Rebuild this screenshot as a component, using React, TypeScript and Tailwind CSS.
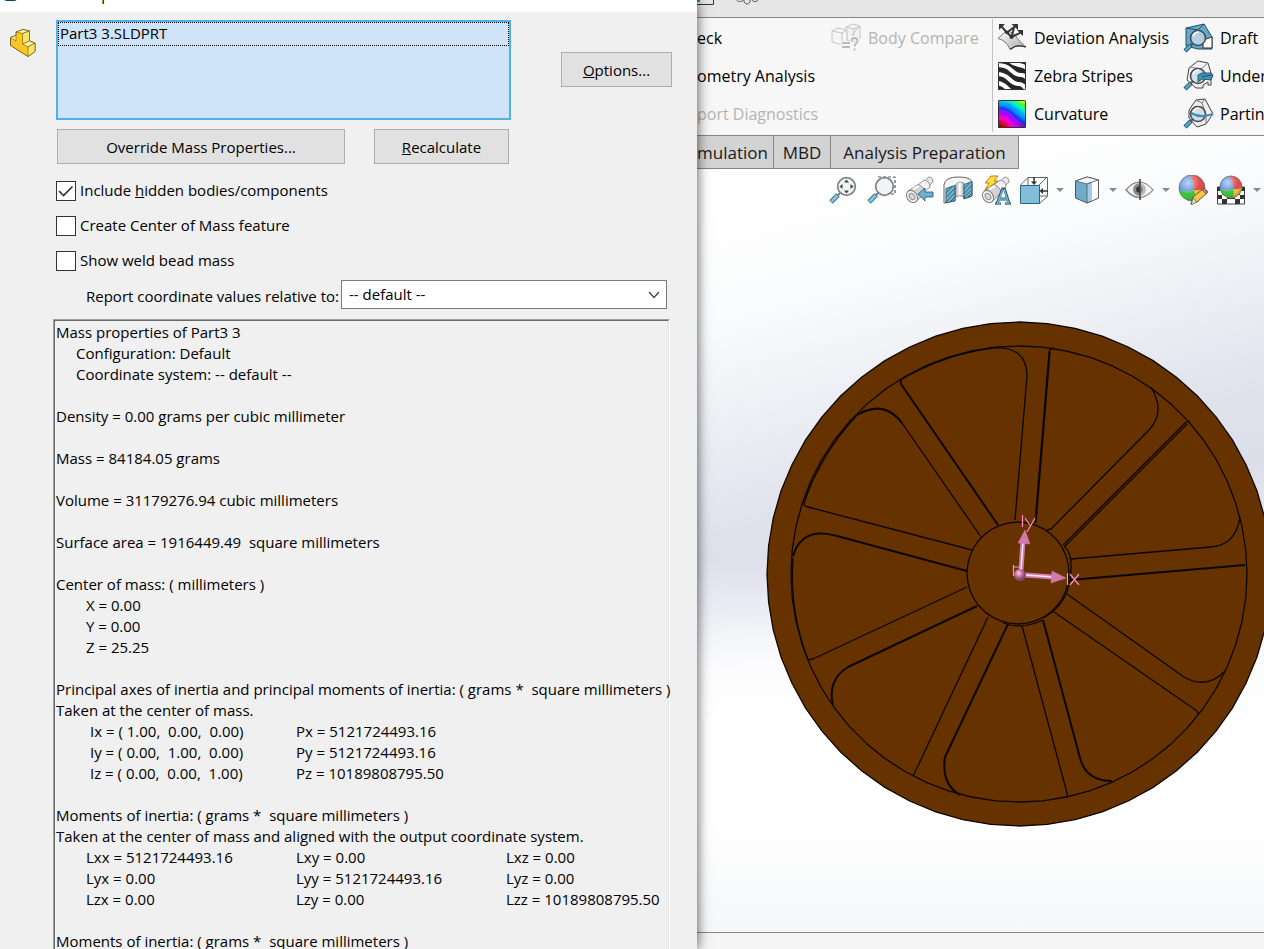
import type { ReactNode } from 'react'

const lxx = [
  ['Lxx = 5121724493.16', 'Lxy = 0.00', 'Lxz = 0.00'],
  ['Lyx = 0.00', 'Lyy = 5121724493.16', 'Lyz = 0.00'],
  ['Lzx = 0.00', 'Lzy = 0.00', 'Lzz = 10189808795.50'],
]

const principal = [
  ['Ix = ( 1.00,  0.00,  0.00)', 'Px = 5121724493.16'],
  ['Iy = ( 0.00,  1.00,  0.00)', 'Py = 5121724493.16'],
  ['Iz = ( 0.00,  0.00,  1.00)', 'Pz = 10189808795.50'],
]

function ring(sides: number, cx: number, cy: number, r: number) {
  return Array.from({ length: sides }, (_, i) => {
    const a = (i / sides) * Math.PI * 2
    return `${(cx + r * Math.cos(a)).toFixed(1)},${(cy + r * Math.sin(a)).toFixed(1)}`
  }).join(' ')
}

export default function App() {
  return (
    <div className="grid h-screen grid-cols-[697fr_567fr] overflow-hidden bg-white font-['Open_Sans',sans-serif] text-black">
      <MassProperties />
      <MainWindow />
    </div>
  )
}

function MassProperties() {
  return (
    <section className="relative z-10 flex min-h-0 flex-col overflow-hidden bg-[#f0f0f0] text-[15px] leading-[21px] shadow-[0_0_12px_rgba(0,0,0,0.7)]">
      <header className="flex h-3 shrink-0 items-end gap-5 overflow-hidden bg-white pb-2 pl-1">
        <svg viewBox="0 0 13 13" className="h-[13px] w-[13px] shrink-0" aria-hidden="true">
          <rect width="13" height="10" rx="3" fill="#0d3f66" />
        </svg>
        <h1 className="leading-5">Mass Properties</h1>
      </header>

      <div className="flex shrink-0 pt-2">
        <div className="w-14 shrink-0 pt-2 pl-[9px]">
          <PartIcon />
        </div>
        <div className="flex min-w-0 flex-1 items-start gap-[50px] pr-[25px]">
          <select
            size={4}
            aria-label="Selected items"
            className="h-[100px] min-w-0 flex-1 appearance-none overflow-hidden border-2 border-[#53b0e4] bg-[#cfe4f8] p-0 outline-none"
          >
            <option className="min-h-6 border border-dotted border-black px-px py-0 leading-[22px]">Part3 3.SLDPRT</option>
          </select>
          <PushButton className="mt-8 w-[111px]">
            <u>O</u>ptions...
          </PushButton>
        </div>
      </div>

      <div className="flex shrink-0 gap-[29px] pt-[9px] pl-[57px]">
        <PushButton className="w-72">Override Mass Properties...</PushButton>
        <PushButton className="w-[135px]">
          <u>R</u>ecalculate
        </PushButton>
      </div>

      <div className="flex shrink-0 flex-col gap-[14px] pt-4 pl-14">
        <CheckRow id="hidden-bodies" checked>
          Include <u>h</u>idden bodies/components
        </CheckRow>
        <CheckRow id="com-feature">Create Center of Mass feature</CheckRow>
        <CheckRow id="weld-bead">Show weld bead mass</CheckRow>
      </div>

      <div className="flex shrink-0 items-center justify-between pt-[9px] pr-[30px] pl-[86px]">
        <label htmlFor="coord" className="shrink-0 pt-1">
          Report coordinate values relative to:
        </label>
        <div className="relative w-[326px] shrink-0">
          <select id="coord" className="h-[29px] w-full appearance-none border border-[#7a7a7a] bg-white pr-6 pl-[7px] outline-none">
            <option>-- default --</option>
          </select>
          <svg viewBox="0 0 12 8" className="pointer-events-none absolute top-[11px] right-[7px] h-2 w-3" fill="none" stroke="#444">
            <path d="M1 1 6 6.5 11 1" strokeWidth="1.3" />
          </svg>
        </div>
      </div>

      <div className="mt-[10px] mr-[27px] ml-[53px] min-h-0 flex-1 border-t border-r border-l border-t-[#a0a0a0] border-r-white border-l-[#a0a0a0]">
        <div className="border-t border-r border-l border-t-[#696969] border-r-[#e3e3e3] border-l-[#696969] pt-px pl-px whitespace-pre">
          <p>Mass properties of Part3 3</p>
          <p className="pl-5">Configuration: Default</p>
          <p className="pl-5">Coordinate system: -- default --</p>
          <p className="mt-[21px]">Density = 0.00 grams per cubic millimeter</p>
          <p className="mt-[21px]">Mass = 84184.05 grams</p>
          <p className="mt-[21px]">Volume = 31179276.94 cubic millimeters</p>
          <p className="mt-[21px]">{'Surface area = 1916449.49  square millimeters'}</p>
          <p className="mt-[21px]">Center of mass: ( millimeters )</p>
          <p className="pl-[30px]">X = 0.00</p>
          <p className="pl-[30px]">Y = 0.00</p>
          <p className="pl-[30px]">Z = 25.25</p>
          <p className="mt-[21px]">{'Principal axes of inertia and principal moments of inertia: ( grams *  square millimeters )'}</p>
          <p>Taken at the center of mass.</p>
          <ValueTable rows={principal} className="w-[420px]" cellClassName="pl-1" />
          <p className="mt-[21px]">{'Moments of inertia: ( grams *  square millimeters )'}</p>
          <p>Taken at the center of mass and aligned with the output coordinate system.</p>
          <ValueTable rows={lxx} className="w-[580px]" cellClassName="pl-0" />
          <p className="mt-[21px]">{'Moments of inertia: ( grams *  square millimeters )'}</p>
        </div>
      </div>
    </section>
  )
}

function ValueTable({ rows, className, cellClassName }: { rows: string[][]; className: string; cellClassName: string }) {
  return (
    <table className={`ml-[30px] table-fixed border-collapse ${className}`}>
      <tbody>
        {rows.map((row) => (
          <tr key={row[0]}>
            {row.map((cell, i) => (
              <td key={cell} className={i === 0 ? `w-[210px] py-0 ${cellClassName}` : 'w-[210px] p-0'}>
                {cell}
              </td>
            ))}
          </tr>
        ))}
      </tbody>
    </table>
  )
}

function PushButton({ className, children }: { className: string; children: ReactNode }) {
  return (
    <button type="button" className={`h-[35px] shrink-0 border border-[#adadad] bg-[#e1e1e1] pt-[2px] ${className}`}>
      {children}
    </button>
  )
}

function CheckRow({ id, checked = false, children }: { id: string; checked?: boolean; children: ReactNode }) {
  return (
    <div className="flex h-[21px] items-center gap-1">
      <div className="relative h-5 w-5">
        <input
          id={id}
          type="checkbox"
          defaultChecked={checked}
          className="peer block h-5 w-5 appearance-none border border-[#333] bg-white"
        />
        <svg viewBox="0 0 20 20" className="pointer-events-none absolute inset-0 hidden h-5 w-5 peer-checked:block" fill="none" stroke="#333">
          <path d="M3 10 7.5 14.5 16.5 5.5" strokeWidth="1.7" />
        </svg>
      </div>
      <label htmlFor={id}>{children}</label>
    </div>
  )
}

function PartIcon() {
  return (
    <svg viewBox="0 0 27 30" className="h-[30px] w-[27px]" stroke="#6b5208" strokeWidth=".9" strokeLinejoin="round">
      <path d="M1.500 9.500 7 7.500V4L14 1.500 20.500 3v10l5.500 2v8.500L19 28.500 1.500 17.500z" fill="#f8c820" />
      <path d="M7 4 14 1.500 20.500 3 13.500 5.500z" fill="#fff2a0" strokeWidth=".6" />
      <path d="M13.500 5.500 20.500 3v10l-6 3-1-1z" fill="#fbe468" strokeWidth=".6" />
      <path d="M13.500 16 20.500 13 26 15l-7 4z" fill="#fff0a0" strokeWidth=".6" />
      <path d="M19 19 26 15v8.500L19 28.500z" fill="#fbe468" strokeWidth=".6" />
      <path d="M1.500 9.500 7 7.500V13z" fill="#fff0a0" strokeWidth=".6" />
    </svg>
  )
}

function MainWindow() {
  return (
    <main className="flex min-h-0 min-w-0 flex-col overflow-hidden bg-[#f5f5f5]">
      <div className="flex h-[18px] shrink-0 items-start border-b border-[#868686] bg-[#e6e6e6]">
        <svg viewBox="0 0 62 5" className="h-[5px] w-[62px]" fill="none">
          <path d="M0 4.500H16.500V0" stroke="#333" />
          <path d="M0 0h3v2H0z" fill="#2680a8" />
          <path d="M40 0c0 2 5 2 6 0M47 0v2q3 4 6 0V0M55 0c1 2 5 2 6 0" stroke="#555" />
        </svg>
      </div>
      <Ribbon />
      <div className="flex min-h-0 flex-1 flex-col border-b border-[#868686] bg-[linear-gradient(180deg,rgba(255,255,255,0)_53%,rgba(255,255,255,0.85)_66%,#ffffff_74%,#ffffff_86%,#f6f7f9_100%),linear-gradient(165deg,#ffffff_8%,#fafbfc_20%,#eceef4_32%,#dfe2ec_43%,#dcdeea_50%,#e6e8f1_60%)]">
        <nav className="flex h-[33px] shrink-0 text-[17px] text-[#1a1a1a]">
          <Tab className="w-[77px]">mulation</Tab>
          <Tab className="w-[57px] justify-center">MBD</Tab>
          <Tab className="w-[188px] justify-center">Analysis Preparation</Tab>
        </nav>
        <ViewToolbar />
        <Wheel />
      </div>
      <div className="h-4 shrink-0" />
    </main>
  )
}

function Tab({ className, children }: { className: string; children: ReactNode }) {
  return (
    <button type="button" className={`flex shrink-0 items-center border-r border-b border-[#868686] bg-[#d3d3d3] pt-[2px] ${className}`}>
      {children}
    </button>
  )
}

function Ribbon() {
  return (
    <div className="flex h-[118px] shrink-0 overflow-hidden border-b border-[#868686] bg-[#f7f7f7] pt-px text-[16px]">
      <div className="flex w-[135px] shrink-0 flex-col">
        <RibbonItem>eck</RibbonItem>
        <RibbonItem>ometry Analysis</RibbonItem>
        <RibbonItem disabled>port Diagnostics</RibbonItem>
      </div>
      <div className="w-40 shrink-0">
        <RibbonItem disabled icon={<CompareIcon />}>
          Body Compare
        </RibbonItem>
      </div>
      <div className="mb-[3px] flex w-[187px] shrink-0 flex-col border-l border-[#c4c4c4] pl-[5px]">
        <RibbonItem icon={<DeviationIcon />}>Deviation Analysis</RibbonItem>
        <RibbonItem icon={<ZebraIcon />}>Zebra Stripes</RibbonItem>
        <RibbonItem icon={<CurvatureIcon />}>Curvature</RibbonItem>
      </div>
      <div className="flex shrink-0 flex-col pl-[5px]">
        <RibbonItem icon={<DraftIcon />}>Draft</RibbonItem>
        <RibbonItem icon={<UndercutIcon />}>Under</RibbonItem>
        <RibbonItem icon={<PartingIcon />}>Partin</RibbonItem>
      </div>
    </div>
  )
}

function RibbonItem({ icon, disabled = false, children }: { icon?: ReactNode; disabled?: boolean; children: ReactNode }) {
  return (
    <button type="button" disabled={disabled} className="flex h-[38px] shrink-0 items-center gap-2 whitespace-nowrap disabled:text-[#b4b4b4]">
      {icon}
      {children}
    </button>
  )
}

function RibbonSvg({ children }: { children: ReactNode }) {
  return (
    <svg viewBox="0 0 28 28" className="h-7 w-7 shrink-0 overflow-visible" fill="none" strokeLinejoin="round">
      {children}
    </svg>
  )
}

function CompareIcon() {
  return (
    <RibbonSvg>
      <path d="M14 3 21 0l7 2v12l-5 4-8-2z" fill="#f3f3f3" stroke="#c4c4c4" />
      <path d="M14 3 22 5 28 2M22 5v9" stroke="#c4c4c4" />
      <path d="M19 12 27 3" stroke="#c4c4c4" />
      <path d="M0 7 6 4l9 2v12l-4 3-11-3z" fill="#f6f6f6" stroke="#c4c4c4" />
      <path d="M0 7 10 9 15 6M10 9v8" stroke="#c4c4c4" />
      <path d="M9 17h10v7H9z" fill="#f7f7f7" />
      <path d="M10 19h8M10 23h8" stroke="#b8b8b8" strokeWidth="2" />
      <path d="M19.500 17q0-3 3-3t3 3q0 2-2 3-1 1-1 2.500" stroke="#f7f7f7" strokeWidth="4" />
      <path d="M19.500 17q0-3 3-3t3 3q0 2-2 3-1 1-1 2.500M22.500 24.500v2" stroke="#b8b8b8" strokeWidth="1.800" />
    </RibbonSvg>
  )
}

function DeviationIcon() {
  return (
    <RibbonSvg>
      <defs>
        <linearGradient id="sheet" x1="0" y1="0" x2="1" y2="1">
          <stop offset="0" stopColor="#fff" />
          <stop offset="1" stopColor="#a8a8a8" />
        </linearGradient>
      </defs>
      <path d="M0 14.500 8 7q8 1 11 7 4 5 9 9-7-2-11-.500L12 25.500Q8 16 0 14.500z" fill="url(#sheet)" stroke="#777" />
      <path d="M12 25.500 17 22.500q4-1.500 11 .500" stroke="#333" strokeWidth="1.300" />
      <path d="M3 2 9 8.500 17.500 2M6 5.500 13.500 13 24 8M13.500 13 16 4" stroke="#333" strokeWidth="1.900" />
      <path d="M1 0h6L1 6zM13.500 0H20v6zM19 6h6v6z" fill="#333" />
      <circle cx="9" cy="8.500" r="1.800" fill="#333" />
      <circle cx="13.500" cy="13" r="2" fill="#333" />
    </RibbonSvg>
  )
}

function ZebraIcon() {
  return (
    <RibbonSvg>
      <defs>
        <clipPath id="zebra">
          <rect width="28" height="28" rx="1" />
        </clipPath>
      </defs>
      <rect width="28" height="28" rx="1" fill="#262626" />
      <g clipPath="url(#zebra)" stroke="#fff" strokeWidth="4">
        <path d="M9-4Q14 2 21 3T32 9" />
        <path d="M-2 3Q8 3 13 8T23 13 32 20" />
        <path d="M-2 12Q6 12 11 17T21 22 30 31" />
        <path d="M-2 21Q4 21 9 26T16 31" />
      </g>
      <rect x=".5" y=".5" width="27" height="27" rx="1" stroke="#333" />
    </RibbonSvg>
  )
}

function CurvatureIcon() {
  return (
    <RibbonSvg>
      <defs>
        <clipPath id="curv">
          <rect width="28" height="28" rx="1" />
        </clipPath>
        <filter id="soften">
          <feGaussianBlur stdDeviation="1.200" />
        </filter>
      </defs>
      <g clipPath="url(#curv)">
        <rect width="28" height="28" fill="#6b1500" />
        <g filter="url(#soften)" strokeWidth="5">
          <path d="M-4 23Q4 20 10 28T14 34" stroke="#e00020" />
          <path d="M-4 18Q5 15 12 23T20 33" stroke="#ff00c8" />
          <path d="M-4 13Q6 10 13 18T26 32" stroke="#b000ff" />
          <path d="M-4 9Q7 6 14 13T32 27" stroke="#1830ff" />
          <path d="M-4 4Q8 2 15 8T32 21" stroke="#00a0ff" />
          <path d="M-4-1Q9-2 16 3T32 15" stroke="#00f0d0" />
          <path d="M6-4Q17-2 22 3T32 8" stroke="#30ff30" />
          <path d="M19-5Q25 0 32 2" stroke="#f4ff00" strokeWidth="6" />
        </g>
      </g>
      <rect x=".5" y=".5" width="27" height="27" rx="1" stroke="#333" />
    </RibbonSvg>
  )
}

function Lens() {
  return (
    <>
      <path d="M9 19 6 22" stroke="#555" strokeWidth="2" />
      <path d="M7 21 1 27" stroke="#1c5470" strokeWidth="4.500" />
      <path d="M6.500 21.500 1.500 26.500" stroke="#5aa9cc" strokeWidth="2.500" />
      <circle cx="14" cy="14" r="7.500" fill="#c4dce8" fillOpacity=".8" stroke="#4a4a4a" strokeWidth="1.600" />
      <path d="M9 12q2-4 6-4" stroke="#fff" strokeWidth="1.500" />
    </>
  )
}

function DraftIcon() {
  return (
    <RibbonSvg>
      <path d="M2 4 20 0l8 13v12H14L2 22z" fill="#62aacb" stroke="#1f4f68" />
      <path d="M2 4 14 6 20 0M14 6l5 9" stroke="#1f4f68" />
      <path d="M19 16 28 13v11h-9z" fill="#fff" stroke="#333" />
      <Lens />
    </RibbonSvg>
  )
}

function UndercutIcon() {
  return (
    <RibbonSvg>
      <path d="M5 6 14-1 24 1l3 10v12h-3v-3l-5 3v3h-7L3 18z" fill="#f2f2f2" stroke="#444" />
      <path d="M6 5l11 2 7-6M17 7l2 6" stroke="#888" />
      <Lens />
      <path d="M14 13v7l4-3 9 1 2-5-2-2H18z" fill="#3f93bb" stroke="#1f4f68" strokeWidth=".9" />
      <path d="M18 14.500 29 13" stroke="#1f4f68" />
    </RibbonSvg>
  )
}

function PartingIcon() {
  return (
    <RibbonSvg>
      <path d="M5 10 12 0l9-1 8 15-7 10-9 3-8-9z" fill="#ededed" stroke="#444" />
      <path d="M12 0 18 3 21-1M18 3l4 12v9" stroke="#777" />
      <Lens />
      <path d="M7 13q7 4 14 3l8-2" stroke="#3c8db5" strokeWidth="2.200" />
    </RibbonSvg>
  )
}

function ViewToolbar() {
  return (
    <div className="flex h-[42px] shrink-0 items-center overflow-hidden pl-[132px]">
      <Tool label="Zoom to Fit">
        <Magnifier />
        <path d="M17.500 4.500l2.500 3h-5zM17.500 18.500l2.500-3h-5zM10.500 11.500l3-2.500v5zM24.500 11.500l-3-2.500v5z" fill="#444" />
      </Tool>
      <Tool label="Zoom to Area">
        <path d="M11 2h17v17H22" stroke="#555" strokeWidth="1.200" strokeDasharray="3 2" />
        <Magnifier />
      </Tool>
      <Tool label="Previous View">
        <Telescope />
        <path d="M13 19 20 13v4h8v5h-8v4z" fill="#6fb0ce" stroke="#2c6580" strokeWidth=".9" />
      </Tool>
      <Tool label="Section View">
        <defs>
          <linearGradient id="bore">
            <stop offset="0" stopColor="#9a9a9a" />
            <stop offset=".5" stopColor="#fff" />
            <stop offset="1" stopColor="#b0b0b0" />
          </linearGradient>
        </defs>
        <path d="M1 10Q2 2 15 2t14 5v14l-8 3-1-3q-5-2-8 1v4L1 28z" fill="#f4f4f4" stroke="#666" />
        <path d="M12 11q3-6 9-3v14q-5-3-9 1z" fill="url(#bore)" stroke="#888" strokeWidth=".8" />
        <path d="M3 13.500 12 10.500v15L3 28zM21 9.500 29 6.500v14.500l-8 2.500z" fill="#74b2cf" stroke="#2c5a70" strokeWidth=".9" />
        <path d="M3 18l6-6.500M3 22.500 12 13M3 27l9-9.500M7 27l5-5M21 14l6-6.500M21 18.500l8-8.500M21 22.500 29 14.500M25 22l4-4" stroke="#24556c" strokeWidth=".9" />
      </Tool>
      <Tool label="Dynamic Annotation Views">
        <Telescope />
        <path d="M10 1h7l-4 5h4L4 15l4-7H4z" fill="#ffe23e" stroke="#b4701a" strokeWidth=".9" />
        <path d="M14 29h6M24 29h6M16 28.500 21.500 14h2L28 28.500M18 24h8" stroke="#2b5b74" strokeWidth="2.800" />
        <path d="M14.500 29h5M24.500 29h5M16.500 28 21.500 15h2L27.500 28M18 24h8" stroke="#75b7d4" strokeWidth="1.400" />
      </Tool>
      <Tool label="View Orientation" menu>
        <path d="M1.500 10 9 2.500h19.500v19l-8 7" stroke="#666" />
        <path d="M9 2v8M20 10l8-8M20 21h8" stroke="#666" />
        <path d="M1.500 10.500h19v18H1.500z" fill="#82bedb" stroke="#2c6580" />
        <path d="M15 2v6M29 16h-6" stroke="#333" strokeWidth="1.500" />
        <path d="M15 10l-3-3.500h6zM20.500 16l3.500-3v6z" fill="#333" />
      </Tool>
      <Tool label="Display Style" menu>
        <path d="M3.500 6 15 2l11.500 3v18L15 28 3.500 23z" fill="#6faccb" stroke="#555" />
        <path d="M3.500 6 15 2l11.500 3L15 9z" fill="#f2f6f8" stroke="#555" strokeWidth=".8" />
        <path d="M15 9 26.500 5v18L15 28z" fill="#9fcde3" stroke="#555" strokeWidth=".8" />
        <path d="M20 7.500 26 5.500v17L20 25.500z" fill="#fbfbfb" />
      </Tool>
      <Tool label="Hide/Show Items" menu>
        <path d="M1 15Q14-1 28 15 14 30 1 15z" fill="#f3f3f3" stroke="#777" strokeWidth="1.200" />
        <circle cx="14.500" cy="14.500" r="6.500" fill="#8a8a8a" />
        <circle cx="14.500" cy="14.500" r="3.300" fill="#333" />
        <path d="M15 7Q22 8 28 15 22 22 15 22.500z" fill="#fff" fillOpacity=".4" />
        <path d="M15 4v21" stroke="#444" strokeWidth="1.600" />
      </Tool>
      <Tool label="Edit Appearance">
        <ColorBall cx={14} cy={13} r={13} />
        <path d="M13 29l2-7L26 13l4 4-11 10z" fill="#f5c945" stroke="#5c4a1a" strokeWidth=".9" />
        <path d="M13 30l2-7 4 4z" fill="#eadcc0" stroke="#555" strokeWidth=".7" />
        <path d="M26 13l4 4-2 2-4-4z" fill="#d87070" stroke="#555" strokeWidth=".6" />
      </Tool>
      <Tool label="Apply Scene" menu>
        <path d="M1.500 12h27v17h-27z" fill="#fff" stroke="#444" />
        <path d="M1 12h5v4H1zM24 12h5v4h-5zM6 16h4v4H6zM20 16h4v4h-4zM1 20h5v4H1zM24 20h5v4h-5zM11 24h8v-2h-8zM6 24h5v5H6zM19 24h5v5h-5z" fill="#333" />
        <ColorBall cx={15} cy={12} r={11} />
      </Tool>
    </div>
  )
}

function Tool({ label, menu = false, children }: { label: string; menu?: boolean; children: ReactNode }) {
  return (
    <>
      <button type="button" aria-label={label} className={menu ? 'w-[30px] shrink-0' : 'w-[38px] shrink-0'}>
        <svg viewBox="0 0 30 30" className="block h-[30px] w-[30px]" fill="none" strokeLinejoin="round">
          {children}
        </svg>
      </button>
      {menu && (
        <button type="button" aria-label={`${label} menu`} className="flex h-[30px] w-[23px] shrink-0 items-center justify-center pr-[2px]">
          <svg viewBox="0 0 8 4" className="h-1 w-2">
            <path d="M0 0h8L4 4z" fill="#8a8a8a" />
          </svg>
        </button>
      )}
    </>
  )
}

function Magnifier() {
  return (
    <>
      <path d="M11 18 8 21" stroke="#777" strokeWidth="2" />
      <path d="M9 20 2 27" stroke="#3f7893" strokeWidth="5" />
      <path d="M8.500 20.500 2.500 26.500" stroke="#86c3dd" strokeWidth="3" />
      <circle cx="17.500" cy="11.500" r="8.800" fill="#eef4f5" fillOpacity=".92" stroke="#808080" strokeWidth="1.700" />
    </>
  )
}

function Telescope() {
  return (
    <>
      <path d="M20 6 23.500 2q4.500 0 4.500 5l-4 4z" fill="#e6e6e6" stroke="#888" strokeWidth=".9" />
      <path d="M13 10 19 5q6 1 6 7l-6 5z" fill="#f2f2f2" stroke="#888" strokeWidth=".9" />
      <path d="M3 16 13 9.500q6 2 7 8L11 27z" fill="#d2d2d2" stroke="#888" strokeWidth=".9" />
      <path d="M8 14 14 11" stroke="#fff" strokeWidth="2" />
      <ellipse cx="7" cy="21.500" rx="5" ry="6.500" transform="rotate(-35 7 21.500)" fill="#f6f6f6" stroke="#808080" />
      <ellipse cx="7" cy="21.500" rx="2.500" ry="3.500" transform="rotate(-35 7 21.500)" fill="#d8d8d8" stroke="#888" />
    </>
  )
}

function ColorBall({ cx, cy, r }: { cx: number; cy: number; r: number }) {
  const id = `shine-${cx}`
  return (
    <>
      <defs>
        <radialGradient id={id} cx=".35" cy=".3" r=".75">
          <stop offset="0" stopColor="#fff" stopOpacity=".65" />
          <stop offset=".6" stopColor="#fff" stopOpacity=".05" />
          <stop offset="1" stopColor="#000" stopOpacity=".3" />
        </radialGradient>
      </defs>
      <circle cx={cx} cy={cy} r={r} fill="#f0c040" />
      <path d={`M${cx - 2} ${cy - r}Q${cx + 3} ${cy - 4} ${cx + 2} ${cy + 2}Q${cx - 5} ${cy + 5} ${cx - r} ${cy + 2}A${r} ${r} 0 0 1 ${cx - 2} ${cy - r}z`} fill="#4a86dd" />
      <path d={`M${cx - 2} ${cy - r}Q${cx + 3} ${cy - 4} ${cx + 2} ${cy + 2}Q${cx + 8} ${cy + 3} ${cx + r} ${cy}A${r} ${r} 0 0 0 ${cx - 2} ${cy - r}z`} fill="#e04040" />
      <path d={`M${cx - r} ${cy + 2}Q${cx - 5} ${cy + 5} ${cx + 2} ${cy + 2}Q${cx + 4} ${cy + 7} ${cx + 1} ${cy + r}A${r} ${r} 0 0 1 ${cx - r} ${cy + 2}z`} fill="#2fc02f" />
      <circle cx={cx} cy={cy} r={r} fill={`url(#${id})`} stroke="#777" strokeWidth=".7" />
    </>
  )
}

// Nine-spoke wheel seen from the front, with the origin triad on its hub
function Wheel() {
  return (
    <svg viewBox="697 211 567 721" className="min-h-0 w-full flex-1" preserveAspectRatio="xMidYMid slice" fill="none" stroke="#0c0600" strokeWidth="1.300" strokeLinejoin="round">
      <defs>
        <radialGradient id="origin" cx=".4" cy=".35">
          <stop offset="0" stopColor="#ffd3ea" />
          <stop offset=".5" stopColor="#cf7aa8" />
          <stop offset="1" stopColor="#8a4670" />
        </radialGradient>
      </defs>
      <polygon points={ring(56, 1019, 574, 252)} fill="#663200" />
      <polygon points={ring(60, 1019, 574, 228)} />
      <polygon points={ring(36, 1018, 573, 51)} />
      <path d="M1043 618Q1066 606 1070 580T1064 546M1003 623Q1022 630 1043 620" />

      <g>
        <path d="M902 379Q945 354 993 348 1027 346 1027 376L1015 520" />
        <path d="M1151 387Q1166 412 1149 430L1051 529 1047 530" />
        <path d="M1240 517Q1236 545 1211 547L1071 559" />
        <path d="M1067 594 1184 677Q1207 690 1225 671" />
        <path d="M1054 612 1197 711 1198 714M1022 626 1067 793V797" />
        <path d="M988 617 916 770 913 776M967 587 813 659 808 660" />
        <path d="M972 550 808 507Q803 506 804 503 820 455 857 415 884 399 902 423L981 537" />
        <path d="M808 660Q789 610 793 558" />
      </g>
      <g strokeWidth="2">
        <path d="M998 525 901 384Q900 381 902 379" />
        <path d="M1070 580 1245 565" />
        <path d="M1043 620 1080 758Q1086 781 1112 781" />
        <path d="M1008 624 945 757Q941 784 960 795" />
        <path d="M977 606 848 667Q827 680 833 705" />
        <path d="M967 571 837 536Q802 526 793 556" />
        <path d="M902 423Q884 399 857 415" />
      </g>
      <path d="M1035 523 1049 352Q1050 348 1054 348M1036 523 1050 352M1063 545 1185 423 1190 421M1065 546 1187 424" />

      <g stroke="#cf7aa8">
        <path d="M1021 570 1023 541" strokeWidth="5" />
        <path d="M1025 575 1053 577" strokeWidth="5" />
        <path d="M1021 570 1023 541M1025 575 1053 577" stroke="#ffe9f5" strokeWidth="1.500" />
        <path d="M1018 543 1025 530 1030 544zM1052 571 1066 578 1051 583z" fill="#cf7aa8" strokeWidth=".5" />
      </g>
      <circle cx="1020" cy="575" r="6" fill="url(#origin)" stroke="none" />
      <g stroke="#ff8cc6" strokeWidth="1.200">
        <path d="M1022.500 515v12M1067.500 573v12M1013.500 565v11M1013 567h6" />
        <path d="M1025 518l5 7M1035 518l-8 14M1070 574l9 11M1079 574l-9 11" />
      </g>
    </svg>
  )
}
